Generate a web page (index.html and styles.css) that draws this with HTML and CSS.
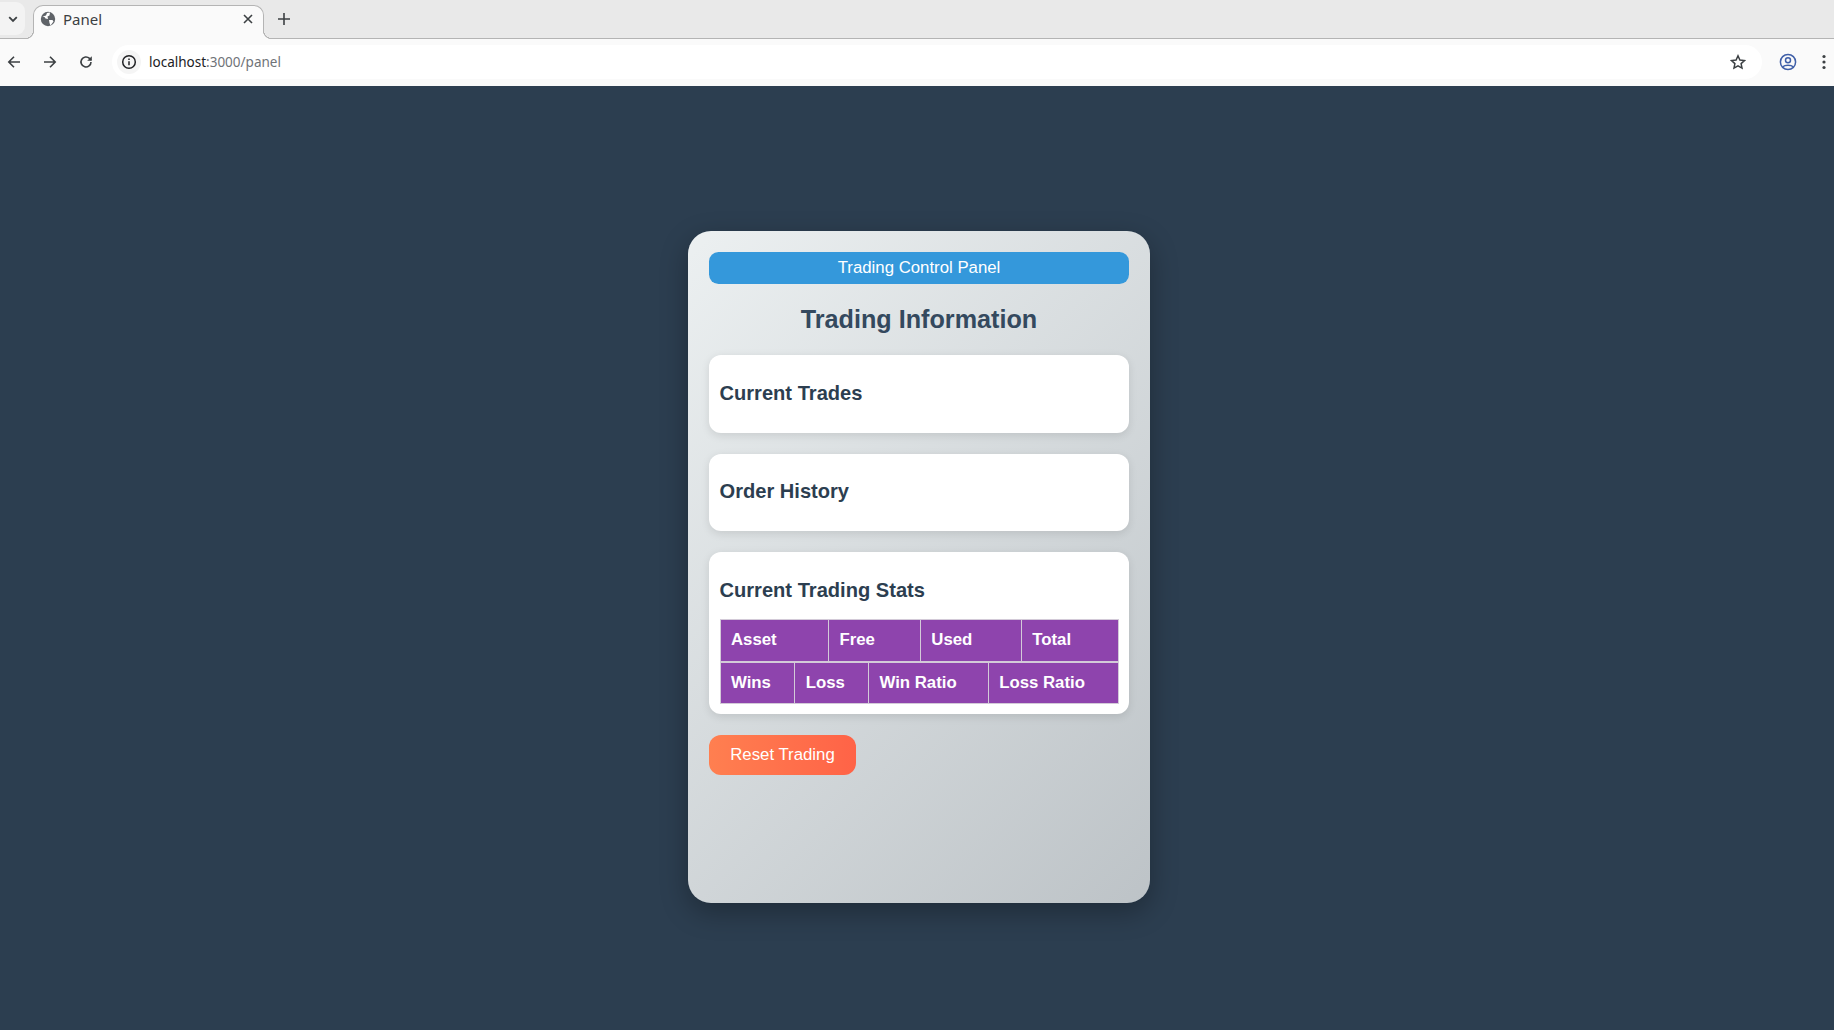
FILE: index.html
```html
<!DOCTYPE html>
<html lang="en">
<head>
<meta charset="utf-8">
<title>Panel</title>
<link rel="stylesheet" href="styles.css">
</head>
<body>
<div class="browser">
  <div class="tabstrip">
    <div class="tab-search">
      <svg class="ico" width="14" height="14" viewBox="0 0 14 14"><path d="M3.2 5.2 7 9l3.8-3.8" fill="none" stroke="#3c4043" stroke-width="1.8"/></svg>
    </div>
    <div class="tab">
      <svg class="ico" width="16" height="16" viewBox="0 0 16 16"><circle cx="8" cy="8" r="7.2" fill="#5f6368"/><path d="M2.5 5.5 6 4.5 7 2l3-.5-.5 3-2 1 .5 2.5-2.5-.5-1-1.5zM9 9h3.5l1 1.5-3 4-1-2.5z" fill="#fff"/></svg>
      <span class="tab-title">Panel</span>
      <svg class="ico tab-close" width="12" height="12" viewBox="0 0 12 12"><path d="M2 2l8 8M10 2l-8 8" stroke="#3c4043" stroke-width="1.6"/></svg>
    </div>
    <svg class="ico new-tab" width="14" height="14" viewBox="0 0 14 14"><path d="M7 1v12M1 7h12" stroke="#3c4043" stroke-width="1.6"/></svg>
  </div>
  <div class="toolbar">
    <svg class="ico nav" width="16" height="16" viewBox="0 0 16 16"><path d="M14 8H3M8 2.8 2.8 8 8 13.2" fill="none" stroke="#3c4043" stroke-width="1.6"/></svg>
    <svg class="ico nav" width="16" height="16" viewBox="0 0 16 16"><path d="M2 8h11M8 2.8 13.2 8 8 13.2" fill="none" stroke="#3c4043" stroke-width="1.6"/></svg>
    <svg class="ico nav" width="16" height="16" viewBox="0 0 16 16"><path d="M13 8a5 5 0 1 1-1.5-3.6L13 6" fill="none" stroke="#3c4043" stroke-width="1.6"/><path d="M13.8 2.2v4.6H9.2z" fill="#3c4043"/></svg>
    <div class="omnibox">
      <span class="info-chip">
        <svg class="ico" width="16" height="16" viewBox="0 0 16 16"><circle cx="8" cy="8" r="6.3" fill="none" stroke="#202124" stroke-width="1.5"/><path d="M8 7.2v4M8 4.6v1.5" stroke="#202124" stroke-width="1.5"/></svg>
      </span>
      <span class="url"><span class="url-host">localhost</span>:3000/panel</span>
      <svg class="ico star" width="16" height="16" viewBox="0 0 16 16"><path d="m8 1.8 1.9 4.2 4.6.5-3.4 3.1.9 4.5L8 11.8l-4 2.3.9-4.5-3.4-3.1 4.6-.5z" fill="none" stroke="#3c4043" stroke-width="1.5"/></svg>
    </div>
    <svg class="ico profile" width="18" height="18" viewBox="0 0 18 18"><circle cx="9" cy="9" r="7.6" fill="none" stroke="#3f5fa8" stroke-width="1.5"/><circle cx="9" cy="7.3" r="2.5" fill="none" stroke="#3f5fa8" stroke-width="1.5"/><path d="M3.8 13.8C6 11.6 12 11.6 14.2 13.8" fill="none" stroke="#3f5fa8" stroke-width="1.5"/></svg>
    <svg class="ico menu" width="4" height="16" viewBox="0 0 4 16"><circle cx="2" cy="2.5" r="1.6" fill="#3c4043"/><circle cx="2" cy="8" r="1.6" fill="#3c4043"/><circle cx="2" cy="13.5" r="1.6" fill="#3c4043"/></svg>
  </div>
</div>
<main class="page">
  <div class="panel">
    <div class="panel-header">Trading Control Panel</div>
    <h2 class="panel-title">Trading Information</h2>
    <section class="card"><h3>Current Trades</h3></section>
    <section class="card"><h3>Order History</h3></section>
    <section class="card card-stats">
      <h3>Current Trading Stats</h3>
      <table class="stats"><tr><th>Asset</th><th>Free</th><th>Used</th><th>Total</th></tr></table>
      <table class="stats"><tr><th>Wins</th><th>Loss</th><th>Win Ratio</th><th>Loss Ratio</th></tr></table>
    </section>
    <button class="reset">Reset Trading</button>
  </div>
</main>
</body>
</html>
```
FILE: styles.css
```css
* { box-sizing: border-box; }
html, body { height: 100%; margin: 0; }
body {
  display: flex;
  flex-direction: column;
  background: #2c3e50;
  font-family: "Liberation Sans", Arial, sans-serif;
  font-size: 18.67px;
  overflow: hidden;
}
.browser { flex: none; font-family: "Noto Sans", sans-serif; }
.ico { display: block; flex: none; }
.tabstrip {
  height: 39px;
  background: #e9e9e9;
  border-bottom: 1px solid #b4b4b4;
  display: flex;
  align-items: flex-start;
}
.tab-search {
  width: 25px;
  height: 33px;
  margin-top: 2px;
  margin-right: 8px;
  background: #f3f3f3;
  border-radius: 0 9px 9px 0;
  display: flex;
  align-items: center;
  justify-content: center;
}
.tab {
  width: 231px;
  height: 34px;
  margin-top: 5px;
  background: #fafafa;
  border: 1px solid #b4b4b4;
  border-bottom: none;
  border-radius: 10px 10px 0 0;
  display: flex;
  align-items: center;
  padding: 0 9px 7px 6px;
  position: relative;
}
.tab::before,
.tab::after {
  content: "";
  position: absolute;
  bottom: 0;
  width: 9px;
  height: 9px;
}
.tab::before {
  left: -9px;
  background: radial-gradient(circle at 0 0, transparent 8px, #b4b4b4 8px, #b4b4b4 9px, #fafafa 9.5px);
}
.tab::after {
  right: -9px;
  background: radial-gradient(circle at 100% 0, transparent 8px, #b4b4b4 8px, #b4b4b4 9px, #fafafa 9.5px);
}
.tab-title { margin-left: 7px; flex: 1; font-size: 15px; color: #3c4043; }
.new-tab { margin: 12px 0 0 13px; }
.toolbar {
  height: 47px;
  padding-bottom: 1px;
  background: #fafafa;
  display: flex;
  align-items: center;
}
.nav { margin-left: 6px; margin-right: 14px; }
.omnibox {
  width: 1650px;
  height: 34px;
  margin-left: 4px;
  background: #fff;
  border-radius: 17px;
  display: flex;
  align-items: center;
  padding: 0 4px 0 5px;
}
.info-chip {
  width: 24px;
  height: 24px;
  border-radius: 50%;
  background: #f5f5f5;
  display: flex;
  align-items: center;
  justify-content: center;
}
.url { flex: 1; margin-left: 8px; font-size: 13.5px; color: #6f7378; }
.url-host { color: #202124; }
.star { margin-right: 12px; }
.profile { margin-left: 17px; }
.menu { margin-left: 25px; }
.page {
  flex: 1;
  display: flex;
  justify-content: center;
  align-items: flex-start;
  padding: 145px 0 0 4px;
}
.panel {
  width: 462px;
  height: 672px;
  padding: 21px;
  border-radius: 23px;
  background: linear-gradient(135deg, #ecf0f1, #bdc3c7);
  box-shadow: 0 9px 28px rgba(0, 0, 0, 0.3);
}
.panel-header {
  height: 31.5px;
  line-height: 31.5px;
  text-align: center;
  color: #fff;
  font-size: 16.8px;
  background: #3498db;
  border-radius: 9.5px;
}
.panel-title {
  margin: 21px 0;
  font-size: 25.2px;
  line-height: 29.5px;
  text-align: center;
  color: #34495e;
}
.card {
  background: #fff;
  border-radius: 12px;
  padding: 10.5px;
  margin-bottom: 21px;
  box-shadow: 0 2.3px 9px rgba(0, 0, 0, 0.1);
}
.card-stats { padding-bottom: 9.5px; }
.card h3 {
  margin: 16px 0 17.5px;
  font-size: 20.1px;
  line-height: 23px;
  color: #2c3e50;
}
.stats {
  width: 100%;
  border-collapse: separate;
  border-spacing: 0;
  border: 1px solid #d3cad8;
}
.stats th {
  background: #8e44ad;
  color: #fff;
  border-right: 1px solid #d3cad8;
  padding: 10.25px 10.5px;
  text-align: left;
  font-size: 16.8px;
  line-height: 20px;
}
.stats th:last-child { border-right: 0; }
.reset {
  display: block;
  width: 147px;
  height: 40px;
  border: 0;
  border-radius: 12px;
  color: #fff;
  font: 16.8px "Liberation Sans", Arial, sans-serif;
  background: linear-gradient(90deg, #ff7f50, #ff6347);
}
```
